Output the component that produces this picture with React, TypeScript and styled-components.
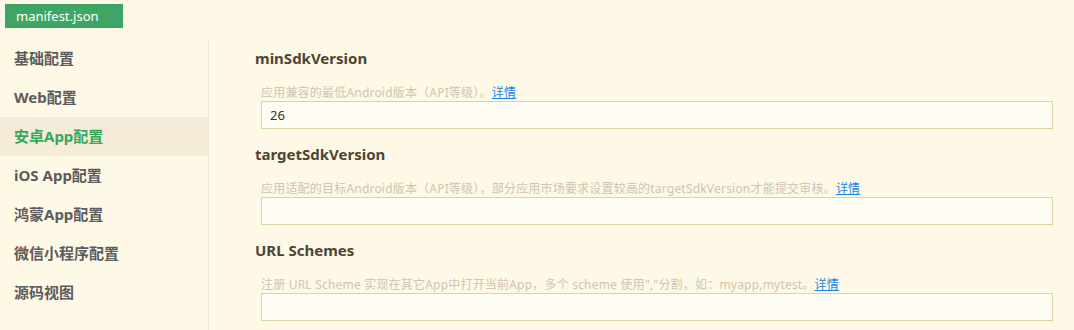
import {createGlobalStyle, styled} from "styled-components";

const GlobalStyle = createGlobalStyle`
  html, body {
    margin: 0;
    padding: 0;
    background: #fef8e7;
    font-family: "Noto Sans", "Noto Sans CJK SC", sans-serif;
  }
`;

interface Field {
    name: string;
    desc: string;
    value: string;
}

const menu = ["基础配置", "Web配置", "安卓App配置", "iOS App配置", "鸿蒙App配置", "微信小程序配置", "源码视图"];

const fields: Field[] = [
    {name: "minSdkVersion", desc: "应用兼容的最低Android版本（API等级）。", value: "26"},
    {name: "targetSdkVersion", desc: "应用适配的目标Android版本（API等级），部分应用市场要求设置较高的targetSdkVersion才能提交审核。", value: ""},
    {name: "URL Schemes", desc: "注册 URL Scheme 实现在其它App中打开当前App，多个 scheme 使用\",\"分割，如：myapp,mytest。", value: ""},
];

export default function App() {
    return (
        <Page>
            <GlobalStyle/>
            <TabBar>
                <Tab>manifest.json</Tab>
            </TabBar>
            <Body>
                <Sidebar>
                    {menu.map((item) => (
                        <MenuItem key={item} $active={item === "安卓App配置"}>{item}</MenuItem>
                    ))}
                </Sidebar>
                <Main>
                    {fields.map((f) => (
                        <Section key={f.name}>
                            <Heading>{f.name}</Heading>
                            <Desc>{f.desc}<a href="#">详情</a></Desc>
                            <Input defaultValue={f.value}/>
                        </Section>
                    ))}
                </Main>
            </Body>
        </Page>
    );
}

const Page = styled.div`
  width: 1074px;
  height: 330px;
  overflow: hidden;
`;

const TabBar = styled.div`
  height: 39px;
  padding: 4px 0 0 5px;
  box-sizing: border-box;
`;

const Tab = styled.div`
  width: 118px;
  height: 24px;
  background: #3da665;
  color: #fff;
  font-size: 13px;
  line-height: 24px;
  padding-left: 11px;
  box-sizing: border-box;
`;

const Body = styled.div`
  display: flex;
  height: 291px;
`;

const Sidebar = styled.div`
  width: 208px;
  border-right: 1px solid #f2ead2;
  flex-shrink: 0;
`;

const MenuItem = styled.div<{ $active?: boolean }>`
  height: 39px;
  line-height: 39px;
  padding-left: 14px;
  font-size: 15px;
  font-weight: 700;
  color: ${({$active}) => $active ? "#35a85c" : "#5c5c5c"};
  background: ${({$active}) => $active ? "#f4ecd8" : "transparent"};
`;

const Main = styled.div`
  flex: 1;
  padding: 7px 21px 0 46px;
`;

const Section = styled.div`
  display: flex;
  flex-direction: column;
  height: 96px;
`;

const Heading = styled.div`
  font-size: 15px;
  font-weight: 700;
  color: #4b4634;
  height: 24px;
  line-height: 24px;
`;

const Desc = styled.div`
  margin: 15px 0 0 6px;
  font-size: 12px;
  line-height: 16px;
  letter-spacing: 0.2px;
  color: #cdc6b2;

  a {
    color: #1a84e6;
    text-decoration: underline;
  }
`;

const Input = styled.input`
  margin: 0 0 0 6px;
  height: 28px;
  box-sizing: border-box;
  border: 1px solid #dfd1a9;
  background: #fffcf4;
  font-family: "Noto Sans", "Noto Sans CJK SC", sans-serif;
  font-size: 13px;
  color: #333;
  padding: 0 8px;
  outline: none;
`;
